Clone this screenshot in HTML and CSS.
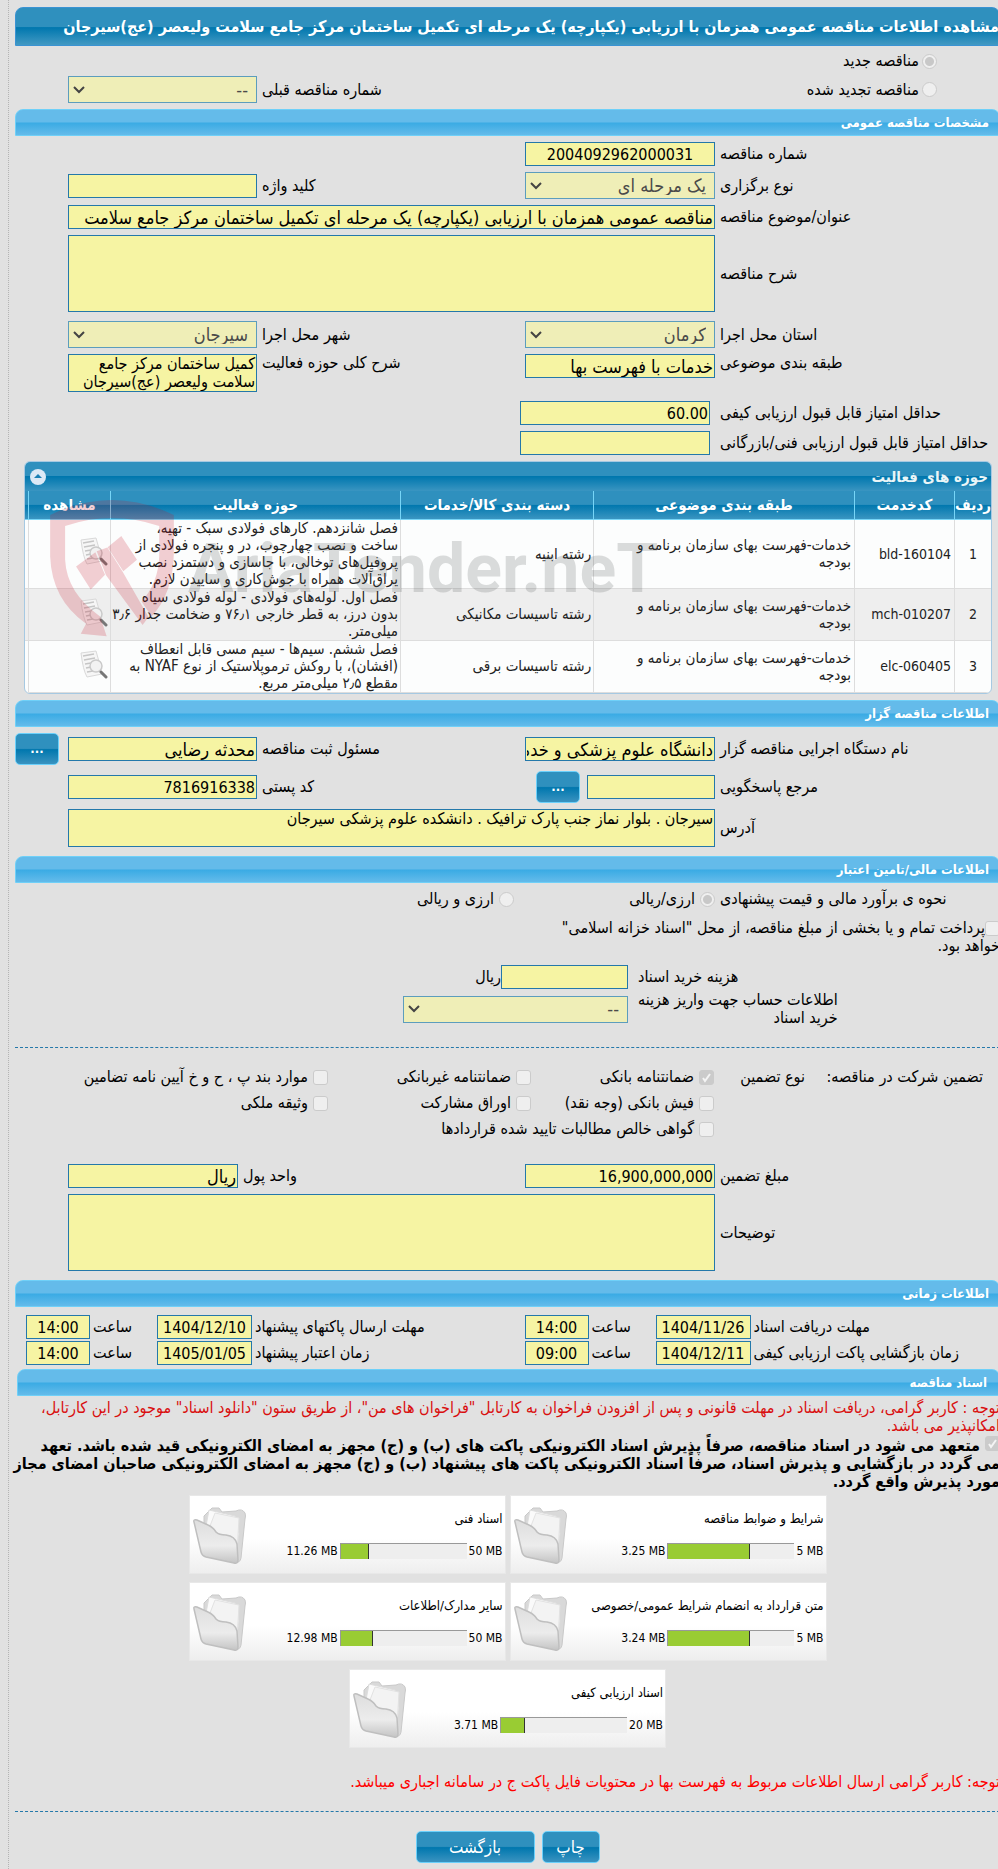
FILE: index.html
```html
<!DOCTYPE html>
<html dir="rtl" lang="fa">
<head>
  <meta charset="utf-8">
  <meta name="viewport" content="width=device-width, initial-scale=1">
  <title>مشاهده اطلاعات مناقصه</title>
  <link rel="stylesheet" href="styles.css">
</head>
<body>
  <svg class="sprite" aria-hidden="true">
    <defs>
      <linearGradient id="folderFront" x1="0" y1="0" x2="0" y2="1">
        <stop offset="0" stop-color="#dedede"/>
        <stop offset="0.6" stop-color="#ececec"/>
        <stop offset="1" stop-color="#c4c4c4"/>
      </linearGradient>
      <symbol id="folder" viewBox="0 0 56 62">
        <path d="M12 12 L20 4 L27 4 L30 8 L44 7 Q50 4 53 9 Q54 12 53 15 L49 54 Q48 59 44 58 L12 22 Z" fill="#d9d9d9" stroke="#c9c9c9"/>
        <path d="M14 22 L17 6 L43 12 L47 30 L44 50 L20 28 Z" fill="#fafafa" stroke="#dddddd"/>
        <path d="M18 22 L23 9 L47 14 L45 48 Z" fill="#f3f3f3" stroke="#e2e2e2"/>
        <path d="M2 18 Q1 15 5 16 L16 21 Q21 23 24 28 Q27 31 34 31 Q43 32 45 40 L46 56 Q46 60 42 59 L14 53 Q10 52 9 48 Z" fill="url(#folderFront)" stroke="#bfbfbf" stroke-width="1.5"/>
      </symbol>
      <symbol id="look" viewBox="0 0 30 30">
        <path d="M3 3 L18 1 L20 8 L24 24 L9 27 Q5 20 3 3 Z" fill="#f6f6f6" stroke="#d9d9d9"/>
        <path d="M5 6 L16 4 M6 10 L17 8 M7 14 L13 13 M8 18 L13 17 M9 22 L15 21" stroke="#c6c6c6" stroke-width="1.5"/>
        <circle cx="18" cy="16" r="6" fill="#f2f2f2" stroke="#cacaca" stroke-width="1.5"/>
        <path d="M23 22 L28 27" stroke="#777" stroke-width="3" stroke-linecap="round"/>
      </symbol>
    </defs>
  </svg>

  <main class="page">
    <h1 class="title-bar">مشاهده اطلاعات مناقصه عمومی همزمان با ارزیابی (یکپارچه) یک مرحله ای تکمیل ساختمان مرکز جامع سلامت ولیعصر (عج)سیرجان</h1>

    <div class="row row-kind">
      <label class="kind"><input type="radio" name="kind" checked disabled>مناقصه جدید</label>
    </div>
    <div class="row">
      <label class="kind"><input type="radio" name="kind" disabled>مناقصه تجدید شده</label>
      <label class="label" for="prev">شماره مناقصه قبلی</label>
      <select id="prev" disabled><option>--</option></select>
    </div>

    <h2 class="section">مشخصات مناقصه عمومی</h2>
    <div class="row">
      <label class="label" for="num">شماره مناقصه</label>
      <input class="center" type="text" id="num" value="2004092962000031" readonly>
    </div>
    <div class="row">
      <label class="label" for="type">نوع برگزاری</label>
      <select id="type" disabled><option>یک مرحله ای</option></select>
      <label class="label" for="keyword">کلید واژه</label>
      <input type="text" id="keyword" readonly>
    </div>
    <div class="row">
      <label class="label" for="subject">عنوان/موضوع مناقصه</label>
      <input class="wide big" type="text" id="subject" value="مناقصه عمومی همزمان با ارزیابی (یکپارچه) یک مرحله ای تکمیل ساختمان مرکز جامع سلامت" readonly>
    </div>
    <div class="row">
      <label class="label" for="desc">شرح مناقصه</label>
      <textarea class="wide tall" id="desc" readonly></textarea>
    </div>
    <div class="row spaced">
      <label class="label" for="province">استان محل اجرا</label>
      <select id="province" disabled><option>کرمان</option></select>
      <label class="label" for="city">شهر محل اجرا</label>
      <select id="city" disabled><option>سیرجان</option></select>
    </div>
    <div class="row row-top">
      <label class="label" for="category">طبقه بندی موضوعی</label>
      <input class="big" type="text" id="category" value="خدمات با فهرست بها" readonly>
      <label class="label" for="scope">شرح کلی حوزه فعالیت</label>
      <textarea class="short" id="scope" readonly>کمیل ساختمان مرکز جامع سلامت ولیعصر (عج)سیرجان</textarea>
    </div>
    <div class="row row-score spaced">
      <label class="label" for="score1">حداقل امتیاز قابل قبول ارزیابی کیفی</label>
      <input type="text" id="score1" value="60.00" readonly>
    </div>
    <div class="row row-score">
      <label class="label" for="score2">حداقل امتیاز قابل قبول ارزیابی فنی/بازرگانی</label>
      <input type="text" id="score2" readonly>
    </div>

    <div class="grid-box">
      <div class="grid-title">
        <span>حوزه های فعالیت</span>
        <button class="collapse" type="button" aria-label="بستن">
          <svg viewBox="0 0 16 16"><circle cx="8" cy="8" r="8" fill="#dce9f6"/><path d="M4 9 L8 5 L12 9 Z" fill="#1c80b4"/></svg>
        </button>
      </div>
      <table class="activities">
        <colgroup>
          <col class="c-row"><col class="c-code"><col class="c-class"><col class="c-group"><col class="c-scope"><col class="c-view"><col class="c-end">
        </colgroup>
        <thead>
          <tr><th>ردیف</th><th>کدخدمت</th><th>طبقه بندی موضوعی</th><th>دسته بندی کالا/خدمات</th><th>حوزه فعالیت</th><th>مشاهده</th><th></th></tr>
        </thead>
        <tbody>
          <tr>
            <td class="mid">1</td><td class="code">bld-160104</td>
            <td class="class">خدمات-فهرست بهای سازمان برنامه و<br>بودجه</td>
            <td>رشته ابنیه</td>
            <td>فصل شانزدهم. کارهای فولادی سبک - تهیه،<br>ساخت و نصب چهارچوب، در و پنجره فولادی از<br>پروفیل‌های توخالی، با جاسازی و دستمزد نصب<br>یراق‌آلات همراه با جوش‌کاری و ساییدن لازم.</td>
            <td><button class="look" type="button" aria-label="مشاهده"><svg><use href="#look"/></svg></button></td><td></td>
          </tr>
          <tr>
            <td class="mid">2</td><td class="code">mch-010207</td>
            <td class="class">خدمات-فهرست بهای سازمان برنامه و<br>بودجه</td>
            <td>رشته تاسیسات مکانیکی</td>
            <td>فصل اول. لوله‌های فولادی - لوله فولادی سیاه<br>بدون درز، به قطر خارجی ۷۶٫۱ و ضخامت جدار ۳٫۶<br>میلی‌متر.</td>
            <td><button class="look" type="button" aria-label="مشاهده"><svg><use href="#look"/></svg></button></td><td></td>
          </tr>
          <tr>
            <td class="mid">3</td><td class="code">elc-060405</td>
            <td class="class">خدمات-فهرست بهای سازمان برنامه و<br>بودجه</td>
            <td>رشته تاسیسات برقی</td>
            <td>فصل ششم. سیم‌ها - سیم مسی قابل انعطاف<br>(افشان)، با روکش ترموپلاستیک از نوع NYAF به<br>مقطع ۲٫۵ میلی‌متر مربع.</td>
            <td><button class="look" type="button" aria-label="مشاهده"><svg><use href="#look"/></svg></button></td><td></td>
          </tr>
        </tbody>
      </table>
      <div class="watermark" dir="ltr">
        <svg viewBox="150 120 372 412">
          <path fill-rule="evenodd" d="M150 165 Q335 75 522 165 V280 Q520 400 455 470 L425 425 Q475 370 478 290 V198 Q335 150 195 198 V300 Q200 400 300 470 L320 530 L242 522 L258 492 Q155 420 150 290 Z"/>
          <path d="M323 262 L364 228 L411 300 L370 334 Z M228 320 L286 277 L315 345 L272 389 Z M290 274 L322 263 L368 336 L446 472 L428 496 L318 346 Z"/>
        </svg>
        <span>AriaTender.neT</span>
      </div>
    </div>

    <h2 class="section">اطلاعات مناقصه گزار</h2>
    <div class="row">
      <label class="label" for="org">نام دستگاه اجرایی مناقصه گزار</label>
      <input class="big" type="text" id="org" value="دانشگاه علوم پزشکی و خدمات بهداشتی" readonly>
      <label class="label" for="owner">مسئول ثبت مناقصه</label>
      <input class="big" type="text" id="owner" value="محدثه رضایی" readonly>
      <button class="btn dots" type="button">...</button>
    </div>
    <div class="row">
      <label class="label" for="contact">مرجع پاسخگویی</label>
      <div class="with-button">
        <input type="text" id="contact" readonly>
        <button class="btn dots" type="button">...</button>
      </div>
      <label class="label" for="zip">کد پستی</label>
      <input type="text" id="zip" value="7816916338" readonly>
    </div>
    <div class="row">
      <label class="label" for="address">آدرس</label>
      <textarea class="wide short" id="address" readonly>سیرجان . بلوار نماز جنب پارک ترافیک . دانشکده علوم پزشکی سیرجان</textarea>
    </div>

    <h2 class="section section-gap">اطلاعات مالی/تامین اعتبار</h2>
    <div class="row row-money" role="radiogroup">
      <span class="label">نحوه ی برآورد مالی و قیمت پیشنهادی</span>
      <label class="check"><input type="radio" name="money" checked disabled>ارزی/ریالی</label>
      <label class="check"><input type="radio" name="money" disabled>ارزی و ریالی</label>
    </div>
    <div class="treasury">
      <input type="checkbox" id="treasury" disabled><label for="treasury">پرداخت تمام و یا بخشی از مبلغ مناقصه، از محل "اسناد خزانه اسلامی"<br>خواهد بود.</label>
    </div>
    <div class="row-fee">
      <label class="label" for="fee">هزینه خرید اسناد</label>
      <div class="fee"><input type="text" id="fee" readonly><span>ریال</span></div>
      <label class="label two-line" for="account">اطلاعات حساب جهت واریز هزینه<br>خرید اسناد</label>
      <select class="account" id="account" disabled><option>--</option></select>
    </div>

    <hr>

    <div class="guarantee">
      <span>تضمین شرکت در مناقصه:</span>
      <span>نوع تضمین</span>
      <label class="check"><input type="checkbox" checked disabled>ضمانتنامه بانکی</label>
      <label class="check"><input type="checkbox" disabled>ضمانتنامه غیربانکی</label>
      <label class="check"><input type="checkbox" disabled>موارد بند پ ، ح و خ آیین نامه تضامین</label>
      <label class="check start"><input type="checkbox" disabled>فیش بانکی (وجه نقد)</label>
      <label class="check"><input type="checkbox" disabled>اوراق مشارکت</label>
      <label class="check"><input type="checkbox" disabled>وثیقه ملکی</label>
      <label class="check start span"><input type="checkbox" disabled>گواهی خالص مطالبات تایید شده قراردادها</label>
    </div>

    <div class="row row-amount">
      <label class="label" for="amount">مبلغ تضمین</label>
      <input type="text" id="amount" value="16,900,000,000" readonly>
      <label class="label" for="currency">واحد پول</label>
      <input class="big" type="text" id="currency" value="ریال" readonly>
    </div>
    <div class="row">
      <label class="label" for="notes">توضیحات</label>
      <textarea class="wide tall" id="notes" readonly></textarea>
    </div>

    <h2 class="section section-gap">اطلاعات زمانی</h2>
    <div class="times">
      <label class="label" for="d1">مهلت دریافت اسناد</label>
      <input class="center" type="text" id="d1" value="1404/11/26" readonly>
      <label class="label" for="h1">ساعت</label>
      <input class="center" type="text" id="h1" value="14:00" readonly>
      <label class="label" for="d2">مهلت ارسال پاکتهای پیشنهاد</label>
      <input class="center" type="text" id="d2" value="1404/12/10" readonly>
      <label class="label" for="h2">ساعت</label>
      <input class="center" type="text" id="h2" value="14:00" readonly>
      <label class="label" for="d3">زمان بازگشایی پاکت ارزیابی کیفی</label>
      <input class="center" type="text" id="d3" value="1404/12/11" readonly>
      <label class="label" for="h3">ساعت</label>
      <input class="center" type="text" id="h3" value="09:00" readonly>
      <label class="label" for="d4">زمان اعتبار پیشنهاد</label>
      <input class="center" type="text" id="d4" value="1405/01/05" readonly>
      <label class="label" for="h4">ساعت</label>
      <input class="center" type="text" id="h4" value="14:00" readonly>
    </div>

    <h2 class="section section-docs">اسناد مناقصه</h2>
    <p class="note">توجه : کاربر گرامی، دریافت اسناد در مهلت قانونی و پس از افزودن فراخوان به کارتابل "فراخوان های من"، از طریق ستون "دانلود اسناد" موجود در این کارتابل،<br>امکانپذیر می باشد.</p>
    <p class="pledge"><input type="checkbox" id="pledge" checked disabled> <label for="pledge">متعهد می شود در اسناد مناقصه، صرفاً پذیرش اسناد الکترونیکی پاکت های (ب) و (ج) مجهز به امضای الکترونیکی قید شده باشد. تعهد<br>می گردد در بازگشایی و پذیرش اسناد، صرفاً اسناد الکترونیکی پاکت های پیشنهاد (ب) و (ج) مجهز به امضای الکترونیکی صاحبان امضای مجاز<br>مورد پذیرش واقع گردد.</label></p>

    <div class="docs">
      <a class="doc" href="#">
        <span class="doc-body"><span class="doc-name">شرایط و ضوابط مناقصه</span>
        <span class="usage" dir="ltr"><span>3.25 MB</span><span class="bar"><span class="fill" style="width: 65%"></span></span><span>5 MB</span></span></span>
        <svg class="doc-icon"><use href="#folder"/></svg>
      </a>
      <a class="doc" href="#">
        <span class="doc-body"><span class="doc-name">اسناد فنی</span>
        <span class="usage" dir="ltr"><span>11.26 MB</span><span class="bar"><span class="fill" style="width: 22.5%"></span></span><span>50 MB</span></span></span>
        <svg class="doc-icon"><use href="#folder"/></svg>
      </a>
      <a class="doc" href="#">
        <span class="doc-body"><span class="doc-name">متن قرارداد به انضمام شرایط عمومی/خصوصی</span>
        <span class="usage" dir="ltr"><span>3.24 MB</span><span class="bar"><span class="fill" style="width: 64.8%"></span></span><span>5 MB</span></span></span>
        <svg class="doc-icon"><use href="#folder"/></svg>
      </a>
      <a class="doc" href="#">
        <span class="doc-body"><span class="doc-name">سایر مدارک/اطلاعات</span>
        <span class="usage" dir="ltr"><span>12.98 MB</span><span class="bar"><span class="fill" style="width: 26%"></span></span><span>50 MB</span></span></span>
        <svg class="doc-icon"><use href="#folder"/></svg>
      </a>
      <a class="doc" href="#">
        <span class="doc-body"><span class="doc-name">اسناد ارزیابی کیفی</span>
        <span class="usage" dir="ltr"><span>3.71 MB</span><span class="bar"><span class="fill" style="width: 18.6%"></span></span><span>20 MB</span></span></span>
        <svg class="doc-icon"><use href="#folder"/></svg>
      </a>
    </div>

    <p class="note note-bright">توجه: کاربر گرامی ارسال اطلاعات مربوط به فهرست بها در محتویات فایل پاکت ج در سامانه اجباری میباشد.</p>
    <hr>
    <div class="actions">
      <button class="btn print" type="button">چاپ</button>
      <button class="btn back" type="button">بازگشت</button>
    </div>
  </main>
</body>
</html>
```
FILE: styles.css
```css
* {
  box-sizing: border-box;
}
body {
  margin: 0;
  overflow-x: hidden;
  background-color: #e1e1e1;
  color: #000;
  font-family: "DejaVu Sans Condensed", "DejaVu Sans", sans-serif;
  font-size: 16px;
  line-height: 18px;
}
.sprite {
  position: absolute;
  width: 0;
  height: 0;
}
/* the form is a little wider than its frame, on the right */
.page {
  min-height: 100vh;
  margin: 0 -2px 0 8px;
  padding: 7px 0 0 6px;
  border-left: 1px dotted #b4b4b4;
}

/* bars */
.title-bar {
  margin: 0;
  height: 39px;
  padding: 0;
  border: 1px solid #3a93d3;
  border-radius: 8px 8px 0 0;
  background: linear-gradient(#2f90be 50%, #0077ae 53%, #4299c3);
  color: #fff;
  font-size: 16px;
  line-height: 37px;
  white-space: nowrap;
}
.section {
  margin: 6px 0 0;
  height: 27px;
  padding: 0 10px;
  border: 1px solid #6fd0f8;
  border-radius: 8px 8px 0 0;
  background: linear-gradient(#64bbea 48%, #3aabe4 52%, #64bbea);
  color: #fff;
  font-size: 13px;
  line-height: 25px;
}
.section-gap {
  margin-top: 9px;
}
.section-docs {
  margin: 4px 0 0 2px;
  padding: 0 12px;
}

/* form rows */
.row {
  display: grid;
  grid-template-columns: minmax(0, 280fr) minmax(0, 190fr) minmax(0, 258fr) minmax(0, 189fr) 48px;
  column-gap: 5px;
  align-items: center;
  margin-top: 6px;
}
.spaced {
  margin-top: 9px;
}
.row-kind {
  height: 24px;
  margin-top: 0;
  padding-top: 6px;
}
.row-top {
  align-items: start;
}
.row-score {
  grid-template-columns: minmax(0, 280fr) minmax(0, 190fr) minmax(0, 495fr);
  column-gap: 10px;
}
.row-amount {
  grid-template-columns: minmax(0, 280fr) minmax(0, 190fr) minmax(0, 277fr) minmax(0, 170fr) 48px;
  margin-top: 22px;
}
.label {
  text-align: left;
  white-space: nowrap;
}
/* long captions run a little past the column */
.row-score .label {
  direction: ltr;
}
.kind {
  grid-column: span 2;
  display: flex;
  align-items: center;
  gap: 3px;
  padding-right: 63px;
}
input,
select,
textarea {
  width: 100%;
  min-width: 0;
  margin: 0;
  padding: 0 1px;
  border: 1px solid #2478aa;
  border-radius: 0;
  outline: none;
  background-color: #f6f4a3;
  color: #000;
  font: inherit;
}
input {
  height: 24px;
}
.big {
  font-size: 18px;
}
.center {
  text-align: center;
}
select {
  height: 27px;
  padding: 0 8px;
  border-color: #5c9dbd;
  background: #efeeb7 url("data:image/svg+xml,%3Csvg xmlns='http://www.w3.org/2000/svg' width='12' height='8'%3E%3Cpath d='M1 1 L6 6 L11 1' fill='none' stroke='%23444' stroke-width='2'/%3E%3C/svg%3E") no-repeat 4px center;
  color: #4a4a4a;
  font-size: 18px;
  opacity: 1;
  appearance: none;
}
textarea {
  display: block;
  resize: none;
  overflow: hidden;
}
.tall {
  height: 77px;
}
.short {
  height: 38px;
}
.wide {
  grid-column: span 3;
}
input[type="radio"],
input[type="checkbox"] {
  flex: none;
  width: 15px;
  height: 15px;
  border: 1px solid #cbcbcb;
  border-radius: 3px;
  background-color: #efefef;
  appearance: none;
}
input[type="radio"] {
  border-radius: 50%;
}
input[type="radio"]:checked {
  background: radial-gradient(#c8c8c8 4px, #efefef 5px);
}
input[type="checkbox"]:checked {
  background: #cbcbcb url("data:image/svg+xml,%3Csvg xmlns='http://www.w3.org/2000/svg' width='13' height='13'%3E%3Cpath d='M3 7 L5 10 L10 3' fill='none' stroke='%23f4f4f4' stroke-width='2'/%3E%3C/svg%3E") no-repeat center;
}

/* activities table */
.grid-box {
  position: relative;
  margin: 6px 8px 0 9px;
  border: 1px solid #a6c9e2;
  border-radius: 6px;
  background-color: #fcfdfd;
  overflow: hidden;
  color: #222;
  font-size: 15px;
}
.grid-title {
  display: flex;
  justify-content: space-between;
  align-items: center;
  height: 29px;
  padding: 0 3px 0 5px;
  background: linear-gradient(#2f90be 48%, #0077ae 50%, #3a95c1);
  color: #eaf5f7;
  font-weight: bold;
}
.collapse,
.look {
  padding: 0;
  border: 0;
  background: none;
}
.collapse svg {
  display: block;
  width: 16px;
  height: 16px;
}
.activities {
  width: 100%;
  border-collapse: separate;
  border-spacing: 0;
  table-layout: fixed;
}
.c-row { width: 37px; }
.c-code { width: 100px; }
.c-class { width: 27%; }
.c-group { width: 20%; }
.c-view { width: 82px; }
.c-end { width: 3px; }
.activities th {
  height: 29px;
  padding: 0;
  border-bottom: 1px solid #77d5f7;
  border-left: 1px solid #77d5f7;
  background: linear-gradient(#2f90be 48%, #0077ae 50%, #3a95c1);
  color: #fff;
  white-space: nowrap;
}
.activities td {
  padding: 0 2px;
  border-bottom: 1px solid #ddd;
  border-left: 1px solid #ddd;
  line-height: 17px;
  white-space: nowrap;
}
.activities tr > :last-child {
  border-left: 0;
}
.activities tbody tr:nth-child(even) {
  background-color: #eee;
}
.activities .mid {
  text-align: center;
}
.activities .class,
.activities .code {
  padding: 0 3px;
}
.activities .mid,
.activities .code {
  font-size: 14px;
}
.look svg {
  display: block;
  width: 30px;
  height: 30px;
}
.watermark {
  position: absolute;
  top: 38px;
  left: 25px;
  display: flex;
  align-items: center;
  gap: 14px;
  pointer-events: none;
}
.watermark svg {
  width: 124px;
  height: 137px;
  fill: rgba(200, 20, 40, 0.2);
}
.watermark span {
  color: rgba(80, 84, 84, 0.2);
  font: bold 68px/80px Roboto, sans-serif;
}

/* buttons */
.btn {
  height: 32px;
  padding: 0;
  border: 1px solid #6ad0fb;
  border-radius: 5px;
  background: linear-gradient(#2f90be 48%, #0077ae 52%, #3a93c0);
  color: #fff;
  font: 17px/28px "DejaVu Sans Condensed", "DejaVu Sans", sans-serif;
}
.dots {
  justify-self: end;
  width: 44px;
  font-size: 13px;
  font-weight: bold;
}
.with-button {
  display: flex;
  align-items: center;
  gap: 7px;
  padding-left: 11px;
}
.with-button .dots {
  flex: none;
}

/* finance */
.row-money {
  grid-template-columns: minmax(0, 280fr) minmax(0, 196fr) minmax(0, 499fr);
  height: 20px;
}
.check {
  display: flex;
  align-items: center;
  gap: 5px;
  white-space: nowrap;
}
.treasury {
  margin-top: 10px;
  line-height: 18px;
}
.treasury input {
  vertical-align: middle;
}
.row-fee {
  display: grid;
  grid-template-columns: minmax(0, 362fr) minmax(0, 613fr);
  column-gap: 10px;
  row-gap: 2px;
  align-items: center;
  margin-top: 10px;
}
.fee {
  display: flex;
  align-items: center;
}
.fee input {
  width: 127px;
}
.row-fee .two-line {
  text-align: right;
  justify-self: end;
}
.account {
  width: 225px;
}
hr {
  margin: 20px 0 0;
  border: 0;
  border-top: 1px dashed #2478aa;
}
.guarantee {
  display: grid;
  grid-template-columns: 178px 91px 183px 203px 1fr;
  grid-auto-rows: 26px;
  align-items: center;
  margin-top: 16px;
  padding-right: 17px;
  white-space: nowrap;
}
.start {
  grid-column-start: 3;
}
.span {
  grid-column-end: span 2;
}

/* dates */
.times {
  display: grid;
  grid-template-columns: minmax(0, 246fr) 95px 61px 64px minmax(0, 266fr) 95px 61px 64px;
  gap: 2px 3px;
  align-items: center;
  margin-top: 8px;
  padding-left: 11px;
}

/* documents */
.note {
  margin: 3px 0 0;
  color: #d90f0f;
  white-space: nowrap;
}
.note-bright {
  margin-top: 25px;
  color: #f00;
}
.pledge {
  margin: 1px 0 0;
  font-weight: bold;
  white-space: nowrap;
}
.docs {
  display: flex;
  flex-wrap: wrap;
  justify-content: center;
  gap: 8px 4px;
  max-width: 640px;
  margin: 4px auto 0;
}
.doc {
  display: flex;
  align-items: center;
  justify-content: space-between;
  width: 317px;
  height: 79px;
  padding: 0 2px;
  border: 1px solid #e8e8e8;
  background: linear-gradient(#fff 55%, #eee);
  color: #000;
  font-size: 13px;
  text-decoration: none;
}
.doc-body {
  display: flex;
  flex-direction: column;
  gap: 14px;
  white-space: nowrap;
}
.usage {
  display: flex;
  justify-content: flex-end;
  align-items: center;
  gap: 2px;
  font-size: 12px;
}
.bar {
  width: 127px;
  height: 16px;
  border-top: 1px solid #999;
  border-left: 1px solid #999;
  background-color: #eee;
}
.fill {
  display: block;
  height: 100%;
  border-right: 1px solid #333;
  background-color: #9c3;
}
.doc-icon {
  flex: none;
  width: 56px;
  height: 62px;
}
.actions {
  display: flex;
  justify-content: center;
  gap: 7px;
  margin-top: 19px;
}
.print {
  width: 58px;
}
.back {
  width: 119px;
}
```
